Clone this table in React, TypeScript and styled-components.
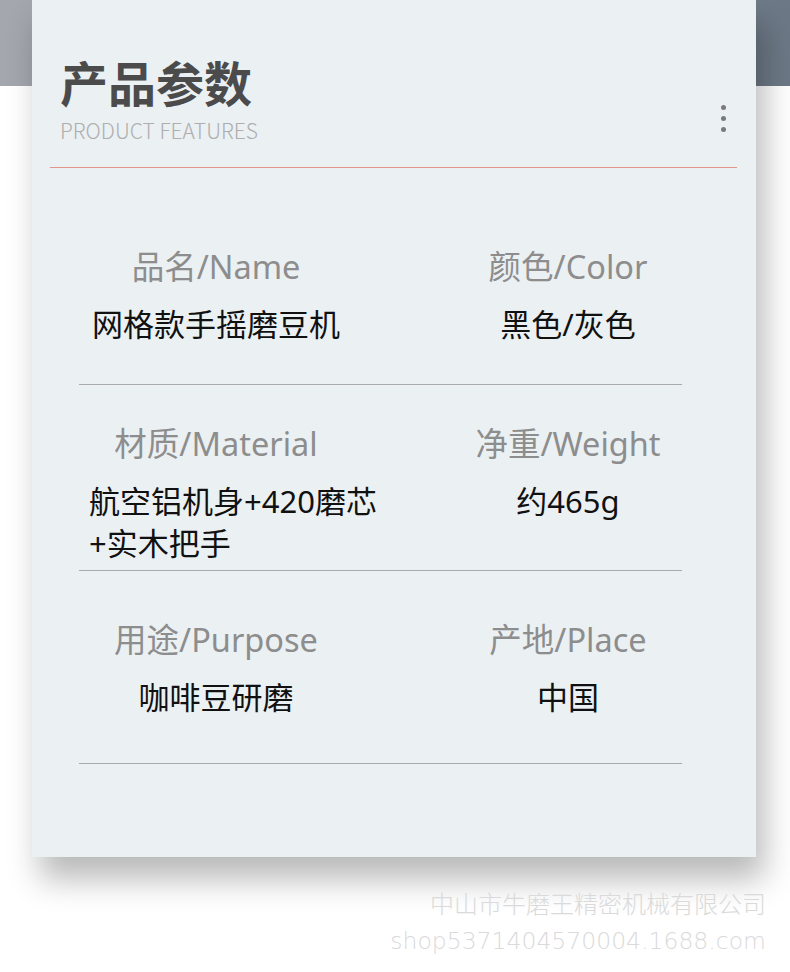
import React from "react";
import styled, { createGlobalStyle } from "styled-components";

const Global = createGlobalStyle`
  html, body { margin: 0; padding: 0; background: #ffffff; }
  body { font-family: "Noto Sans CJK SC", "Noto Sans", sans-serif; }
`;

const Page = styled.div`
  width: 790px;
  min-height: 972px;
  overflow: hidden;
  background:
    linear-gradient(90deg, #a4a8ae 0%, #8e959e 50%, #6c7886 100%) top left / 100% 86px no-repeat,
    #ffffff;
  display: flex;
  flex-direction: column;
`;

const Card = styled.section`
  margin: 0 34px 0 32px;
  height: 857px;
  box-sizing: border-box;
  background: #ebf0f3;
  box-shadow: 8px 22px 30px rgba(0, 0, 0, 0.28);
  padding-top: 57px;
  display: flex;
  flex-direction: column;
`;

const Header = styled.header`
  display: flex;
  justify-content: space-between;
  align-items: flex-end;
  padding: 0 30px 0 28px;
`;

const TitleBlock = styled.div`
  display: flex;
  flex-direction: column;
  gap: 13px;
`;

const Title = styled.h1`
  margin: 0;
  font-size: 48px;
  line-height: 48px;
  font-weight: 700;
  color: #4b4b4b;
`;

const Subtitle = styled.div`
  font-size: 21px;
  line-height: 24px;
  font-weight: 300;
  color: #aeaeae;
`;

const Dots = styled.div`
  display: flex;
  flex-direction: column;
  gap: 6px;
  margin-bottom: 10px;
`;

const Dot = styled.span`
  width: 5px;
  height: 5px;
  border-radius: 50%;
  background: #7a7a7a;
`;

const HeaderRule = styled.hr`
  margin: 25px 19px 0 18px;
  border: none;
  height: 1px;
  background: #e3958b;
`;

const Table = styled.div`
  margin: 0 74px 0 47px;
  display: flex;
  flex-direction: column;
  font-family: "Noto Sans", "Noto Sans CJK SC", sans-serif;
`;

const Row = styled.div<{ $top: number; $bottom: number }>`
  display: grid;
  grid-template-columns: 274px 110px 210px;
  grid-template-areas: "a . b";
  padding: ${(p) => p.$top}px 0 ${(p) => p.$bottom}px;
  border-bottom: 1px solid #a9a9a9;
`;

const Cell = styled.div<{ $area: string }>`
  grid-area: ${(p) => p.$area};
  display: flex;
  flex-direction: column;
  align-items: center;
  gap: 16px;
`;

const Label = styled.div`
  font-size: 32.5px;
  line-height: 40px;
  color: #8d8d8d;
  white-space: nowrap;
`;

const Value = styled.div<{ $left?: boolean }>`
  font-size: 31px;
  line-height: 42px;
  color: #111111;
  white-space: nowrap;
  align-self: ${(p) => (p.$left ? "flex-start" : "center")};
  padding-left: ${(p) => (p.$left ? "10px" : "0")};
`;

const Footer = styled.footer`
  margin-top: 30px;
  padding-right: 24px;
  display: flex;
  flex-direction: column;
  align-items: flex-end;
  font-family: "DejaVu Sans", "Noto Sans CJK SC", sans-serif;
  font-size: 23.5px;
  line-height: 36px;
  font-weight: 300;
  color: #dadada;
`;

const FooterCn = styled.div`
  font-size: 24px;
`;

type Item = { label: string; value: string[]; left?: boolean };
type RowData = { top: number; bottom: number; items: [Item, Item] };

const rows: RowData[] = [
  {
    top: 79,
    bottom: 39,
    items: [
      { label: "品名/Name", value: ["网格款手摇磨豆机"] },
      { label: "颜色/Color", value: ["黑色/灰色"] },
    ],
  },
  {
    top: 39,
    bottom: 6,
    items: [
      { label: "材质/Material", value: ["航空铝机身+420磨芯", "+实木把手"], left: true },
      { label: "净重/Weight", value: ["约465g"] },
    ],
  },
  {
    top: 49,
    bottom: 45,
    items: [
      { label: "用途/Purpose", value: ["咖啡豆研磨"] },
      { label: "产地/Place", value: ["中国"] },
    ],
  },
];

export default function App() {
  return (
    <>
      <Global />
      <Page>
        <Card>
          <Header>
            <TitleBlock>
              <Title>产品参数</Title>
              <Subtitle>PRODUCT FEATURES</Subtitle>
            </TitleBlock>
            <Dots>
              <Dot />
              <Dot />
              <Dot />
            </Dots>
          </Header>
          <HeaderRule />
          <Table>
            {rows.map((r, i) => (
              <Row key={i} $top={r.top} $bottom={r.bottom}>
                {r.items.map((it, j) => (
                  <Cell key={j} $area={j === 0 ? "a" : "b"}>
                    <Label>{it.label}</Label>
                    <Value $left={it.left}>
                      {it.value.map((line, k) => (
                        <div key={k}>{line}</div>
                      ))}
                    </Value>
                  </Cell>
                ))}
              </Row>
            ))}
          </Table>
        </Card>
        <Footer>
          <FooterCn>中山市牛磨王精密机械有限公司</FooterCn>
          <div>shop5371404570004.1688.com</div>
        </Footer>
      </Page>
    </>
  );
}
